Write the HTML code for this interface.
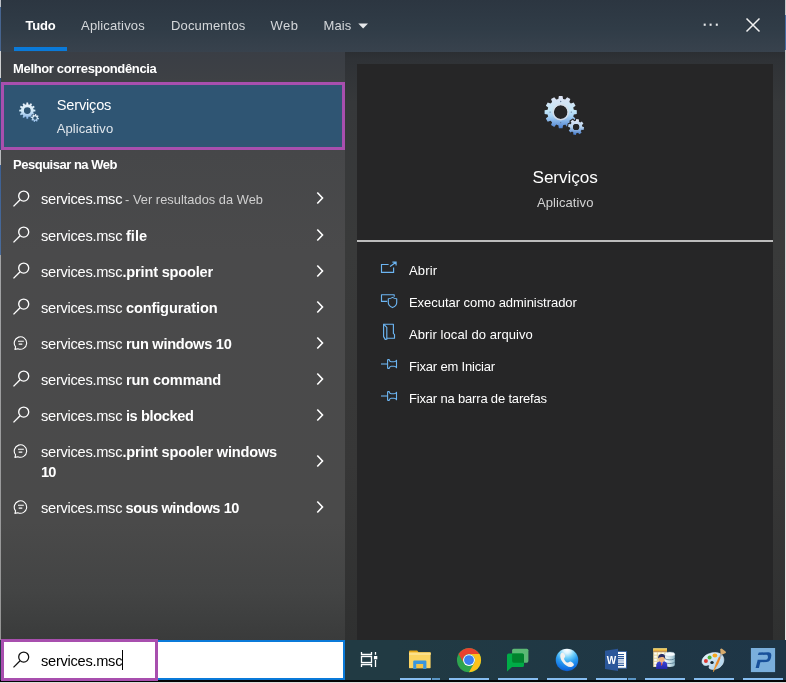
<!DOCTYPE html>
<html lang="pt-BR"><head><meta charset="utf-8"><title>Pesquisar</title>
<style>
*{box-sizing:border-box;margin:0;padding:0}
html,body{width:786px;height:683px;overflow:hidden;background:#2c2e31}
body{position:relative;font-family:"Liberation Sans","DejaVu Sans",sans-serif;color:#fff;font-size:13px}
.abs{position:absolute}
.tx{position:absolute;white-space:nowrap;line-height:20px;height:20px}
#edge{left:0;top:0;width:1px;height:640px;background:linear-gradient(180deg,#bcc0c6 0,#bcc0c6 7px,#46648f 7px,#46648f 51px,#cfcfd0 51px,#cfcfd0 78px,#33507a 78px,#33507a 150px,#b9babd 150px,#b9babd 165px,#3c5f92 165px,#4a6c9c 255px,#a2a3a5 255px,#959595 100%)}
#edger{left:785px;top:0;width:1px;height:640px;background:linear-gradient(180deg,#c4c6c9 0,#c4c6c9 15px,#4a6ea2 15px,#4a6ea2 50px,#c9cacc 50px,#e4e4e4 100%)}
#header{left:1px;top:0;width:784px;height:52px;background:linear-gradient(180deg,#2c3641 0%,#303c47 55%,#38424d 100%)}
#left{left:1px;top:52px;width:344px;height:588px;background:linear-gradient(180deg,#3a3e45 0,#3e4145 30px,#464749 100px,#4a4a4b 200px,#4a4a4a 470px,#434444 540px,#3a3b3b 588px)}
#right{left:345px;top:52px;width:440px;height:588px;background:linear-gradient(180deg,#2b2e32 0,#2f3236 8px,#36383a 50px,#393a3a 33%,#373737 70%,#2f3030 100%)}
#card{left:357px;top:64px;width:416px;height:576px;background:#262627}
#divider{left:357px;top:240px;width:416px;height:2px;background:#bcbcbc}
#tabline{left:14px;top:47px;width:53px;height:4px;background:#0a7ad9}
#sel{left:1px;top:82px;width:344px;height:68px;background:#2f5573;border:3px solid #a84fae}
#taskbar{left:0;top:640px;width:786px;height:40px;background:linear-gradient(90deg,#213a43 0,#213a43 50%,#1e3546 100%)}
#tbline{left:0;top:680px;width:786px;height:2px;background:#050505}
#tbline2{left:0;top:682px;width:786px;height:1px;background:#dcdcdc}
#sbox{left:1px;top:640px;width:344px;height:40px;background:#fff;border:2px solid #0a7ad9;border-left:0}
#sboxp{left:1px;top:639px;width:157px;height:42px;border:3px solid #a84fae;background:#fff}
#caret{left:122px;top:650px;width:1.2px;height:19.6px;background:#000}
#txt{position:absolute;left:0;top:0;width:786px;height:683px;will-change:transform}
.ul{position:absolute;top:678px;height:2px;background:#86bdf0}
</style></head><body>
<div id="header" class="abs"></div>
<div id="left" class="abs"></div>
<div id="right" class="abs"></div>
<div id="card" class="abs"></div>
<div id="divider" class="abs"></div>
<div id="edge" class="abs"></div>
<div id="edger" class="abs"></div>
<div id="tabline" class="abs"></div>
<div id="sel" class="abs"></div>
<svg class="abs" style="left:357.5px;top:23px" width="11" height="6" viewBox="0 0 11 6"><path d="M0.3 0.4 H10 L5.15 5.5 Z" fill="#e6e8ea"/></svg>
<svg class="abs" style="left:702px;top:22px" width="18" height="6" viewBox="0 0 18 6" fill="#e8eaec"><rect x="1.7" y="1.6" width="2" height="2.2"/><rect x="7.6" y="1.6" width="2" height="2.2"/><rect x="13.8" y="1.6" width="2" height="2.2"/></svg>
<svg class="abs" style="left:745px;top:17px" width="16" height="16" viewBox="0 0 16 16" stroke="#f2f2f2" stroke-width="1.5" fill="none"><path d="M1.5 1.5 L14.5 14.5 M14.5 1.5 L1.5 14.5"/></svg>
<svg class="abs" style="left:544px;top:95px" width="42" height="42" viewBox="0 0 42 42">
<defs><linearGradient id="gg" x1="0" y1="0" x2="0" y2="1"><stop offset="0" stop-color="#dfe3f3"/><stop offset="0.45" stop-color="#c3e6f7"/><stop offset="0.62" stop-color="#a9d4f6"/><stop offset="1" stop-color="#4f82d0"/></linearGradient>
<linearGradient id="gg2" x1="0" y1="0" x2="0" y2="1"><stop offset="0" stop-color="#e6eaf5"/><stop offset="0.5" stop-color="#b5d2ee"/><stop offset="1" stop-color="#3f76c8"/></linearGradient></defs>
<path d="M29.55,13.66 L29.79,14.74 L32.79,15.26 L32.79,18.94 L29.79,19.46 L29.55,20.54 L29.21,21.61 L31.56,23.55 L29.72,26.74 L26.86,25.68 L26.10,26.50 L25.28,27.26 L26.34,30.12 L23.15,31.96 L21.21,29.61 L20.14,29.95 L19.06,30.19 L18.54,33.19 L14.86,33.19 L14.34,30.19 L13.26,29.95 L12.19,29.61 L10.25,31.96 L7.06,30.12 L8.12,27.26 L7.30,26.50 L6.54,25.68 L3.68,26.74 L1.84,23.55 L4.19,21.61 L3.85,20.54 L3.61,19.46 L0.61,18.94 L0.61,15.26 L3.61,14.74 L3.85,13.66 L4.19,12.59 L1.84,10.65 L3.68,7.46 L6.54,8.52 L7.30,7.70 L8.12,6.94 L7.06,4.08 L10.25,2.24 L12.19,4.59 L13.26,4.25 L14.34,4.01 L14.86,1.01 L18.54,1.01 L19.06,4.01 L20.14,4.25 L21.21,4.59 L23.15,2.24 L26.34,4.08 L25.28,6.94 L26.10,7.70 L26.86,8.52 L29.72,7.46 L31.56,10.65 L29.21,12.59Z M23.50,17.10 A6.80,6.80 0 1,0 9.90,17.10 A6.80,6.80 0 1,0 23.50,17.10Z" fill="url(#gg)" fill-rule="evenodd"/>
<circle cx="16.7" cy="17.1" r="7.7" fill="none" stroke="#d9dde6" stroke-width="1.4" opacity="0.9"/>
<g fill="#5f7596"><circle cx="16.7" cy="6.5" r="0.65"/><circle cx="16.7" cy="27.7" r="0.65"/><circle cx="6.1" cy="17.1" r="0.65"/><circle cx="27.3" cy="17.1" r="0.65"/></g>
<path d="M38.09,30.83 L38.19,31.59 L40.10,32.23 L39.56,34.90 L37.55,34.75 L37.16,35.41 L36.69,36.01 L37.59,37.82 L35.32,39.32 L34.01,37.79 L33.27,37.99 L32.51,38.09 L31.87,40.00 L29.20,39.46 L29.35,37.45 L28.69,37.06 L28.09,36.59 L26.28,37.49 L24.78,35.22 L26.31,33.91 L26.11,33.17 L26.01,32.41 L24.10,31.77 L24.64,29.10 L26.65,29.25 L27.04,28.59 L27.51,27.99 L26.61,26.18 L28.88,24.68 L30.19,26.21 L30.93,26.01 L31.69,25.91 L32.33,24.00 L35.00,24.54 L34.85,26.55 L35.51,26.94 L36.11,27.41 L37.92,26.51 L39.42,28.78 L37.89,30.09Z M35.20,32.00 A3.10,3.10 0 1,0 29.00,32.00 A3.10,3.10 0 1,0 35.20,32.00Z" fill="#262627" stroke="#262627" stroke-width="2.2" stroke-linejoin="round"/>
<path d="M38.09,30.83 L38.19,31.59 L40.10,32.23 L39.56,34.90 L37.55,34.75 L37.16,35.41 L36.69,36.01 L37.59,37.82 L35.32,39.32 L34.01,37.79 L33.27,37.99 L32.51,38.09 L31.87,40.00 L29.20,39.46 L29.35,37.45 L28.69,37.06 L28.09,36.59 L26.28,37.49 L24.78,35.22 L26.31,33.91 L26.11,33.17 L26.01,32.41 L24.10,31.77 L24.64,29.10 L26.65,29.25 L27.04,28.59 L27.51,27.99 L26.61,26.18 L28.88,24.68 L30.19,26.21 L30.93,26.01 L31.69,25.91 L32.33,24.00 L35.00,24.54 L34.85,26.55 L35.51,26.94 L36.11,27.41 L37.92,26.51 L39.42,28.78 L37.89,30.09Z M35.20,32.00 A3.10,3.10 0 1,0 29.00,32.00 A3.10,3.10 0 1,0 35.20,32.00Z" fill="url(#gg2)" fill-rule="evenodd"/>
<circle cx="32.1" cy="32" r="3.1" fill="#262627"/>
</svg>
<svg class="abs" style="left:19px;top:101.8px" width="21" height="21" viewBox="0 0 21 21">
<defs><linearGradient id="gs" x1="0" y1="0" x2="0" y2="1"><stop offset="0" stop-color="#eef1f8"/><stop offset="0.5" stop-color="#d3ebf8"/><stop offset="1" stop-color="#86b2e6"/></linearGradient></defs>
<path d="M14.39,6.97 L14.52,7.58 L16.36,7.76 L16.36,9.44 L14.52,9.62 L14.39,10.23 L14.19,10.83 L15.70,11.90 L14.86,13.36 L13.18,12.59 L12.75,13.05 L12.29,13.48 L13.06,15.16 L11.60,16.00 L10.53,14.49 L9.93,14.69 L9.32,14.82 L9.14,16.66 L7.46,16.66 L7.28,14.82 L6.67,14.69 L6.07,14.49 L5.00,16.00 L3.54,15.16 L4.31,13.48 L3.85,13.05 L3.42,12.59 L1.74,13.36 L0.90,11.90 L2.41,10.83 L2.21,10.23 L2.08,9.62 L0.24,9.44 L0.24,7.76 L2.08,7.58 L2.21,6.97 L2.41,6.37 L0.90,5.30 L1.74,3.84 L3.42,4.61 L3.85,4.15 L4.31,3.72 L3.54,2.04 L5.00,1.20 L6.07,2.71 L6.67,2.51 L7.28,2.38 L7.46,0.54 L9.14,0.54 L9.32,2.38 L9.93,2.51 L10.53,2.71 L11.60,1.20 L13.06,2.04 L12.29,3.72 L12.75,4.15 L13.18,4.61 L14.86,3.84 L15.70,5.30 L14.19,6.37Z M11.70,8.60 A3.40,3.40 0 1,0 4.90,8.60 A3.40,3.40 0 1,0 11.70,8.60Z" fill="url(#gs)" fill-rule="evenodd"/>
<path d="M18.85,15.44 L18.90,15.87 L20.00,16.18 L19.75,17.39 L18.62,17.24 L18.41,17.62 L18.14,17.96 L18.70,18.95 L17.67,19.64 L16.97,18.73 L16.56,18.85 L16.13,18.90 L15.82,20.00 L14.61,19.75 L14.76,18.62 L14.38,18.41 L14.04,18.14 L13.05,18.70 L12.36,17.67 L13.27,16.97 L13.15,16.56 L13.10,16.13 L12.00,15.82 L12.25,14.61 L13.38,14.76 L13.59,14.38 L13.86,14.04 L13.30,13.05 L14.33,12.36 L15.03,13.27 L15.44,13.15 L15.87,13.10 L16.18,12.00 L17.39,12.25 L17.24,13.38 L17.62,13.59 L17.96,13.86 L18.95,13.30 L19.64,14.33 L18.73,15.03Z M17.50,16.00 A1.50,1.50 0 1,0 14.50,16.00 A1.50,1.50 0 1,0 17.50,16.00Z" fill="#2f5573" stroke="#2f5573" stroke-width="1.2"/>
<path d="M18.85,15.44 L18.90,15.87 L20.00,16.18 L19.75,17.39 L18.62,17.24 L18.41,17.62 L18.14,17.96 L18.70,18.95 L17.67,19.64 L16.97,18.73 L16.56,18.85 L16.13,18.90 L15.82,20.00 L14.61,19.75 L14.76,18.62 L14.38,18.41 L14.04,18.14 L13.05,18.70 L12.36,17.67 L13.27,16.97 L13.15,16.56 L13.10,16.13 L12.00,15.82 L12.25,14.61 L13.38,14.76 L13.59,14.38 L13.86,14.04 L13.30,13.05 L14.33,12.36 L15.03,13.27 L15.44,13.15 L15.87,13.10 L16.18,12.00 L17.39,12.25 L17.24,13.38 L17.62,13.59 L17.96,13.86 L18.95,13.30 L19.64,14.33 L18.73,15.03Z M17.50,16.00 A1.50,1.50 0 1,0 14.50,16.00 A1.50,1.50 0 1,0 17.50,16.00Z" fill="url(#gs)" fill-rule="evenodd"/>
<circle cx="16" cy="16" r="1.5" fill="#2f5573"/>
</svg>
<svg class="abs" style="left:12.7px;top:189.5px" width="18" height="18" viewBox="0 0 18 18" fill="none" stroke="#fff" stroke-width="1.35" stroke-linecap="butt"><circle cx="10.7" cy="6.1" r="5"/><path d="M7.1 9.7 L0.5 16.4"/></svg>
<svg class="abs" style="left:12.7px;top:226.2px" width="18" height="18" viewBox="0 0 18 18" fill="none" stroke="#fff" stroke-width="1.35" stroke-linecap="butt"><circle cx="10.7" cy="6.1" r="5"/><path d="M7.1 9.7 L0.5 16.4"/></svg>
<svg class="abs" style="left:12.7px;top:262.2px" width="18" height="18" viewBox="0 0 18 18" fill="none" stroke="#fff" stroke-width="1.35" stroke-linecap="butt"><circle cx="10.7" cy="6.1" r="5"/><path d="M7.1 9.7 L0.5 16.4"/></svg>
<svg class="abs" style="left:12.7px;top:298.2px" width="18" height="18" viewBox="0 0 18 18" fill="none" stroke="#fff" stroke-width="1.35" stroke-linecap="butt"><circle cx="10.7" cy="6.1" r="5"/><path d="M7.1 9.7 L0.5 16.4"/></svg>
<svg class="abs" style="left:13.1px;top:335.2px" width="16" height="16" viewBox="0 0 16 16" fill="none" stroke="#fff" stroke-width="1.1" stroke-linejoin="round"><path d="M2.6 11.9 A6.2 6.2 0 1 1 4.9 13.7 L1.9 14.4 Z"/><path d="M5 6.3 H10.8 M5.7 9.1 H9.3" stroke-width="1.1"/></svg>
<svg class="abs" style="left:12.7px;top:370.2px" width="18" height="18" viewBox="0 0 18 18" fill="none" stroke="#fff" stroke-width="1.35" stroke-linecap="butt"><circle cx="10.7" cy="6.1" r="5"/><path d="M7.1 9.7 L0.5 16.4"/></svg>
<svg class="abs" style="left:12.7px;top:406.2px" width="18" height="18" viewBox="0 0 18 18" fill="none" stroke="#fff" stroke-width="1.35" stroke-linecap="butt"><circle cx="10.7" cy="6.1" r="5"/><path d="M7.1 9.7 L0.5 16.4"/></svg>
<svg class="abs" style="left:13.1px;top:443.2px" width="16" height="16" viewBox="0 0 16 16" fill="none" stroke="#fff" stroke-width="1.1" stroke-linejoin="round"><path d="M2.6 11.9 A6.2 6.2 0 1 1 4.9 13.7 L1.9 14.4 Z"/><path d="M5 6.3 H10.8 M5.7 9.1 H9.3" stroke-width="1.1"/></svg>
<svg class="abs" style="left:13.1px;top:499.2px" width="16" height="16" viewBox="0 0 16 16" fill="none" stroke="#fff" stroke-width="1.1" stroke-linejoin="round"><path d="M2.6 11.9 A6.2 6.2 0 1 1 4.9 13.7 L1.9 14.4 Z"/><path d="M5 6.3 H10.8 M5.7 9.1 H9.3" stroke-width="1.1"/></svg>
<svg class="abs" style="left:315.5px;top:191.3px" width="9" height="14" viewBox="0 0 9 14" fill="none" stroke="#fff" stroke-width="1.6"><path d="M1.3 1.5 L6.5 7 L1.3 12.5"/></svg>
<svg class="abs" style="left:315.5px;top:228px" width="9" height="14" viewBox="0 0 9 14" fill="none" stroke="#fff" stroke-width="1.6"><path d="M1.3 1.5 L6.5 7 L1.3 12.5"/></svg>
<svg class="abs" style="left:315.5px;top:264px" width="9" height="14" viewBox="0 0 9 14" fill="none" stroke="#fff" stroke-width="1.6"><path d="M1.3 1.5 L6.5 7 L1.3 12.5"/></svg>
<svg class="abs" style="left:315.5px;top:300px" width="9" height="14" viewBox="0 0 9 14" fill="none" stroke="#fff" stroke-width="1.6"><path d="M1.3 1.5 L6.5 7 L1.3 12.5"/></svg>
<svg class="abs" style="left:315.5px;top:336px" width="9" height="14" viewBox="0 0 9 14" fill="none" stroke="#fff" stroke-width="1.6"><path d="M1.3 1.5 L6.5 7 L1.3 12.5"/></svg>
<svg class="abs" style="left:315.5px;top:372px" width="9" height="14" viewBox="0 0 9 14" fill="none" stroke="#fff" stroke-width="1.6"><path d="M1.3 1.5 L6.5 7 L1.3 12.5"/></svg>
<svg class="abs" style="left:315.5px;top:408px" width="9" height="14" viewBox="0 0 9 14" fill="none" stroke="#fff" stroke-width="1.6"><path d="M1.3 1.5 L6.5 7 L1.3 12.5"/></svg>
<svg class="abs" style="left:315.5px;top:454px" width="9" height="14" viewBox="0 0 9 14" fill="none" stroke="#fff" stroke-width="1.6"><path d="M1.3 1.5 L6.5 7 L1.3 12.5"/></svg>
<svg class="abs" style="left:315.5px;top:500px" width="9" height="14" viewBox="0 0 9 14" fill="none" stroke="#fff" stroke-width="1.6"><path d="M1.3 1.5 L6.5 7 L1.3 12.5"/></svg>

<svg class="abs" style="left:380px;top:260px" width="18" height="14" viewBox="0 0 18 14" fill="none" stroke="#6cb5f2" stroke-width="1.15">
<path d="M8.6 4.5 H1.5 V12.4 H13.6 V7.4"/><path d="M10 6.5 L16 2.2 M12.4 2.1 H16.1 V5.6"/></svg>
<svg class="abs" style="left:380px;top:293px" width="18" height="16" viewBox="0 0 18 16" fill="none" stroke="#6cb5f2" stroke-width="1.15" stroke-linejoin="round">
<path d="M7.2 8.4 H1.5 V1.7 H14.2 V3.8"/><path d="M12.5 4.4 C11.3 5.3 9.8 5.7 8.3 5.7 V9.4 C8.3 11.9 10.3 13.6 12.5 14.6 C14.7 13.6 16.7 11.9 16.7 9.4 V5.7 C15.2 5.7 13.7 5.3 12.5 4.4 Z"/></svg>
<svg class="abs" style="left:381px;top:322px" width="16" height="19" viewBox="0 0 16 19" fill="none" stroke="#6cb5f2" stroke-width="1.15" stroke-linejoin="round">
<path d="M2.6 2.2 H12.4 V11.6 L13.5 12.4 V16.2 H6"/><path d="M2.6 2.2 L5.8 5.4 V17.3 L4.2 17.4 L2.6 14.6 Z"/></svg>
<svg class="abs" style="left:380px;top:357.5px" width="19" height="12" viewBox="0 0 19 12" fill="none" stroke="#6cb5f2" stroke-width="1.1" stroke-linejoin="round">
<path d="M1 6 H7.4"/><path d="M7.6 1.6 V10.4 M7.6 1.6 H9.2 Q9.6 3.7 11.2 3.7 H14 Q15.8 3.7 16.5 2.2 V9.8 Q15.8 8.3 14 8.3 H11.2 Q9.6 8.3 9.2 10.4 H7.6" /></svg>
<svg class="abs" style="left:380px;top:389.5px" width="19" height="12" viewBox="0 0 19 12" fill="none" stroke="#6cb5f2" stroke-width="1.1" stroke-linejoin="round">
<path d="M1 6 H7.4"/><path d="M7.6 1.6 V10.4 M7.6 1.6 H9.2 Q9.6 3.7 11.2 3.7 H14 Q15.8 3.7 16.5 2.2 V9.8 Q15.8 8.3 14 8.3 H11.2 Q9.6 8.3 9.2 10.4 H7.6" /></svg>

<div id="taskbar" class="abs"></div>
<div id="tbline" class="abs"></div>
<div id="tbline2" class="abs"></div>
<div id="sbox" class="abs"></div>
<div id="sboxp" class="abs"></div>
<svg class="abs" style="left:12.8px;top:651.1px" width="18" height="18" viewBox="0 0 18 18" fill="none" stroke="#111" stroke-width="1.25" stroke-linecap="butt"><circle cx="10.7" cy="6.1" r="5"/><path d="M7.1 9.7 L0.5 16.4"/></svg>
<div id="caret" class="abs"></div>

<!-- task view -->
<svg class="abs" style="left:359px;top:650px" width="20" height="19" viewBox="0 0 20 19" fill="none" stroke="#fff" stroke-width="1.3">
<path d="M2.5 1.9 V4.5 H12.5 V1.9"/><rect x="2.5" y="6.5" width="10" height="6"/><path d="M2.5 16.9 V14.5 H12.5 V16.9"/>
<path d="M16.5 1.9 V4.8 M16.5 10.1 V16.9"/><rect x="14.9" y="6" width="3.4" height="3.3" fill="#fff" stroke="none"/></svg>
<div class="ul" style="left:400px;width:31px"></div><div class="ul" style="left:432px;width:8px;background:#5a95c4"></div>
<!-- explorer -->
<svg class="abs" style="left:408px;top:649px" width="24" height="22" viewBox="0 0 24 22">
<path d="M1 2.6 Q1 1.6 2 1.6 H9.2 L10.6 3.2 H22 Q22.6 3.2 22.6 3.8 V5 H1 Z" fill="#e8a91a"/>
<rect x="1" y="3.6" width="21.6" height="15.6" rx="0.6" fill="#fbd462"/>
<rect x="1" y="3.6" width="21.6" height="2.4" fill="#fce08a"/>
<path d="M5.2 19.9 V12.6 Q5.2 11.6 6.2 11.6 H17.4 Q18.4 11.6 18.4 12.6 V19.9 H15.1 V15 H8.5 V19.9 Z" fill="#3a96dd"/>
<rect x="8.5" y="15" width="6.6" height="4.2" fill="#f6c344"/>
</svg>
<div class="ul" style="left:449px;width:40px"></div>
<!-- chrome -->
<svg class="abs" style="left:456px;top:647px" width="26" height="26" viewBox="-13 -13.1 26 26">
<circle r="12.07" fill="#2ea44f"/>
<path d="M-10.43 -6.07 A12.07 12.07 0 0 1 10.47 -6 L0 -6 A6 6 0 0 0 -5.196 3 Z" fill="#e8412f"/>
<path d="M10.47 -6 A12.07 12.07 0 0 1 -0.04 12.07 L5.196 3 A6 6 0 0 0 0 -6 Z" fill="#fcc21b"/>
<circle r="5.95" fill="#fff"/><circle r="4.95" fill="#3a7ff0"/>
</svg>
<div class="ul" style="left:498px;width:40px"></div>
<!-- google chat -->
<svg class="abs" style="left:505px;top:647px" width="26" height="26" viewBox="0 0 26 26">
<rect x="7.1" y="1.7" width="16.3" height="14" rx="1.6" fill="#5bb974"/>
<path d="M3.6 6.6 H17.4 Q19 6.6 19 8.2 V18.4 Q19 20 17.4 20 H7 L2 24.4 V8.2 Q2 6.6 3.6 6.6 Z" fill="#00ac47"/>
<path d="M7.1 6.6 H17.4 Q19 6.6 19 8.2 V15.7 H8.7 Q7.1 15.7 7.1 14.1 Z" fill="#00832d"/>
</svg>
<div class="ul" style="left:547px;width:40px"></div>
<!-- phone -->
<svg class="abs" style="left:555px;top:648px" width="24" height="24" viewBox="-12 -12 24 24">
<defs><radialGradient id="ph" cx="0.5" cy="0.08" r="0.95" fx="0.5" fy="0.05"><stop offset="0" stop-color="#ffffff"/><stop offset="0.16" stop-color="#dcf4fe"/><stop offset="0.36" stop-color="#72d1fa"/><stop offset="0.58" stop-color="#2c9ef0"/><stop offset="0.84" stop-color="#1273e4"/><stop offset="1" stop-color="#0b55c6"/></radialGradient></defs>
<circle cx="0" cy="-0.1" r="11.25" fill="url(#ph)"/>
<path d="M-5.6 -6.9 C-7.4 -5.5 -7 -1.5 -4.6 1.8 C-2.2 5.2 1.5 7.5 4.2 7 C5.8 6.7 7 5.6 6.9 4.6 C6.8 3.6 4.8 2 3.6 1.5 C2.6 1.1 1.8 2.6 0.6 2.6 C-0.8 2.6 -2.8 0.2 -2.9 -1.2 C-3 -2.2 -1.6 -2.8 -1.8 -3.9 C-2 -5.2 -3.2 -6.9 -4 -7.2 C-4.6 -7.4 -5.1 -7.3 -5.6 -6.9 Z" fill="#f3f1ef"/>
</svg>
<div class="ul" style="left:596px;width:31px"></div><div class="ul" style="left:628px;width:8px;background:#5a95c4"></div>
<!-- word -->
<svg class="abs" style="left:603px;top:647px;will-change:transform" width="26" height="26" viewBox="0 0 26 26">
<rect x="12.5" y="4.4" width="11" height="16.8" fill="#fff" stroke="#2b579a" stroke-width="0.9"/>
<path d="M15 7.5 H21 M15 9.6 H21 M15 11.6 H21 M15 16.3 H21 M15 18.4 H21" stroke="#2b579a" stroke-width="1.1"/><path d="M15 13.9 H21" stroke="#a9bbd8" stroke-width="1.6"/>
<path d="M2 3.8 L15 1.8 V23.9 L2 21.9 Z" fill="#2b579a"/>
<text x="8.4" y="17" font-family="Liberation Sans, sans-serif" font-weight="bold" font-size="10" fill="#fff" text-anchor="middle">W</text>
</svg>
<div class="ul" style="left:645px;width:40px"></div>
<!-- db user -->
<svg class="abs" style="left:652px;top:647px" width="24" height="24" viewBox="0 0 24 24">
<defs><linearGradient id="dbh" x1="0" y1="0" x2="0" y2="1"><stop offset="0" stop-color="#f9dc6a"/><stop offset="1" stop-color="#dfa233"/></linearGradient>
<linearGradient id="dbc" x1="0" y1="0" x2="1" y2="0"><stop offset="0" stop-color="#f4fafc"/><stop offset="0.45" stop-color="#d4e8ee"/><stop offset="1" stop-color="#8fb6c6"/></linearGradient>
<linearGradient id="dbs" x1="0" y1="0" x2="0" y2="1"><stop offset="0" stop-color="#3a46d8"/><stop offset="1" stop-color="#2226a8"/></linearGradient></defs>
<rect x="1.2" y="1.4" width="13.8" height="18.6" fill="#e6d6a2"/>
<rect x="1.2" y="1.4" width="13.8" height="2.9" fill="url(#dbh)"/><rect x="1.2" y="4.3" width="13.8" height="0.5" fill="#a8683a"/>
<g fill="#fdfdf8"><rect x="2.2" y="5.6" width="2.6" height="2"/><rect x="5.9" y="5.6" width="2.6" height="2"/><rect x="9.6" y="5.6" width="2.6" height="2"/><rect x="2.2" y="8.7" width="2.6" height="2"/><rect x="5.9" y="8.7" width="2.6" height="2"/><rect x="2.2" y="11.8" width="2.6" height="2"/><rect x="2.2" y="14.9" width="2.6" height="2"/><rect x="2.2" y="17.6" width="2.6" height="1.8"/></g>
<path d="M12.7 7.2 V18 C12.7 20.6 22.8 20.6 22.8 18 V7.2 Z" fill="url(#dbc)"/>
<ellipse cx="17.75" cy="7.2" rx="5.05" ry="2.1" fill="#f6fbfd" stroke="#9fbccb" stroke-width="0.4"/>
<path d="M12.7 11 C12.7 13.4 22.8 13.4 22.8 11 M12.7 14.7 C12.7 17.1 22.8 17.1 22.8 14.7" stroke="#4b6f86" stroke-width="0.75" fill="none"/>
<path d="M4.1 22.1 L4.3 17.6 Q4.6 15 7.6 14.3 L11.8 14.3 Q15 15 15.2 17.6 L15.4 22.1 Z" fill="url(#dbs)"/>
<path d="M8.5 14.3 L9.7 18.8 L10.9 14.3 Z" fill="#f2f2f8"/><path d="M9.35 14.9 H10.05 L10.3 17.6 L9.7 18.8 L9.1 17.6 Z" fill="#d9452f"/>
<ellipse cx="9.7" cy="12.2" rx="2.7" ry="3" fill="#f0b47e"/>
<path d="M6.3 11.6 C5.6 8.2 8 7 9.8 7 C12 7 13.8 8.4 13 11.8 C12.4 10.4 11.6 9.8 9.6 9.9 C7.8 10 6.9 10.4 6.3 11.6 Z" fill="#2b2f66"/>
</svg>
<div class="ul" style="left:694px;width:40px"></div>
<!-- paint -->
<svg class="abs" style="left:701px;top:647px" width="26" height="26" viewBox="0 0 26 26">
<defs><linearGradient id="pal" x1="0" y1="0" x2="1" y2="1"><stop offset="0" stop-color="#eaf4fb"/><stop offset="0.5" stop-color="#c9e2f3"/><stop offset="1" stop-color="#a5cdea"/></linearGradient>
<linearGradient id="brh" x1="0" y1="0" x2="1" y2="0"><stop offset="0" stop-color="#f7a63c"/><stop offset="1" stop-color="#e2761a"/></linearGradient></defs>
<path d="M13.5 5.6 C19.5 5.2 23.2 9 22.8 13.4 C22.4 18.6 17.4 22.6 11.4 22.4 C8.6 22.3 7.4 21 8.2 19.6 C8.8 18.4 8 17.6 6.4 18.2 C3.6 19.2 1 17.6 1 14.6 C1 9.8 6.6 6 13.5 5.6 Z" fill="url(#pal)" stroke="#e4f1fa" stroke-width="0.6"/>
<ellipse cx="11" cy="15.6" rx="1.7" ry="1.5" fill="#16262e"/>
<ellipse cx="4.9" cy="14" rx="2" ry="1.9" fill="#dc3a32"/>
<ellipse cx="8.6" cy="10.5" rx="2" ry="2" fill="#4cb43a"/>
<ellipse cx="13.9" cy="8.6" rx="2.4" ry="2" fill="#f6a81e"/>
<path d="M18 9.8 L19.7 10.6 L17.4 16.5 L12.5 24.9 L11.9 24.5 L15.2 15.6 Z" fill="url(#brh)"/>
<path d="M19.6 6.8 L21.4 7.6 L19.7 10.6 L18 9.8 Z" fill="#a2a9b1"/>
<path d="M19.6 6.8 L19.2 2.2 Q20 1.4 21 1.7 L24.6 4.6 Q25.2 5.4 24.8 6.1 L21.4 7.6 Z" fill="#d7aa6c"/>
</svg>
<div class="ul" style="left:743px;width:40px"></div>
<!-- P -->
<svg class="abs" style="left:750px;top:647px" width="26" height="26" viewBox="0 0 26 26">
<rect x="0.9" y="1" width="24.2" height="24.1" fill="#7aafdc"/>
<path d="M5.6 20.9 L7.7 12.7 L16 12.7 Q17.6 12.6 17.9 10.8 Q18.3 7.9 16.4 7.8 L7.8 8 L8.8 5.5 L18.2 5.2 Q21.6 5.3 21.3 8.8 Q21 14.6 16.8 15 L10.3 15.2 L8.9 20.9 Z" fill="#18509a"/>
</svg>

<div id="txt">
<div class="tx" style="left:25.50px;top:18px;line-height:15px;height:15px;font-size:13px;font-weight:bold;color:#ffffff;letter-spacing:-0.203px">Tudo</div>
<div class="tx" style="left:81.10px;top:18px;line-height:15px;height:15px;font-size:13px;font-weight:normal;color:#d4d7da;letter-spacing:0.142px">Aplicativos</div>
<div class="tx" style="left:171.00px;top:18px;line-height:15px;height:15px;font-size:13px;font-weight:normal;color:#d4d7da;letter-spacing:0.152px">Documentos</div>
<div class="tx" style="left:270.50px;top:18px;line-height:15px;height:15px;font-size:13px;font-weight:normal;color:#d4d7da;letter-spacing:0.500px">Web</div>
<div class="tx" style="left:323.50px;top:18px;line-height:15px;height:15px;font-size:13px;font-weight:normal;color:#d4d7da;letter-spacing:0.137px">Mais</div>
<div class="tx" style="left:13.00px;top:61px;line-height:15px;height:15px;font-size:13px;font-weight:bold;color:#ffffff;letter-spacing:-0.340px">Melhor correspondência</div>
<div class="tx" style="left:56.80px;top:97px;line-height:16px;height:16px;font-size:14.6px;font-weight:normal;color:#ffffff;letter-spacing:-0.196px">Serviços</div>
<div class="tx" style="left:56.80px;top:121px;line-height:15px;height:15px;font-size:13px;font-weight:normal;color:#dfe6ec;letter-spacing:0.076px">Aplicativo</div>
<div class="tx" style="left:13.00px;top:157px;line-height:15px;height:15px;font-size:13px;font-weight:bold;color:#ffffff;letter-spacing:-0.484px">Pesquisar na Web</div>
<div class="tx" style="left:41.00px;top:191px;line-height:16px;height:16px;font-size:14.6px;font-weight:normal;color:#ffffff;letter-spacing:-0.261px">services.msc</div>
<div class="tx" style="left:125.00px;top:192px;line-height:15px;height:15px;font-size:12.8px;font-weight:normal;color:#d0d0d0;letter-spacing:0.041px">- Ver resultados da Web</div>
<div class="tx" style="left:41.00px;top:228px;line-height:16px;height:16px;font-size:14.6px;font-weight:normal;color:#ffffff;letter-spacing:-0.261px">services.msc</div>
<div class="tx" style="left:125.90px;top:228px;line-height:16px;height:16px;font-size:14.6px;font-weight:bold;color:#ffffff;letter-spacing:0.077px">file</div>
<div class="tx" style="left:41.00px;top:264px;line-height:16px;height:16px;font-size:14.6px;font-weight:normal;color:#ffffff;letter-spacing:-0.261px">services.msc</div>
<div class="tx" style="left:122.50px;top:264px;line-height:16px;height:16px;font-size:14.6px;font-weight:bold;color:#ffffff;letter-spacing:-0.196px">.print spooler</div>
<div class="tx" style="left:41.00px;top:300px;line-height:16px;height:16px;font-size:14.6px;font-weight:normal;color:#ffffff;letter-spacing:-0.261px">services.msc</div>
<div class="tx" style="left:125.90px;top:300px;line-height:16px;height:16px;font-size:14.6px;font-weight:bold;color:#ffffff;letter-spacing:-0.126px">configuration</div>
<div class="tx" style="left:41.00px;top:336px;line-height:16px;height:16px;font-size:14.6px;font-weight:normal;color:#ffffff;letter-spacing:-0.261px">services.msc</div>
<div class="tx" style="left:125.90px;top:336px;line-height:16px;height:16px;font-size:14.6px;font-weight:bold;color:#ffffff;letter-spacing:-0.276px">run windows 10</div>
<div class="tx" style="left:41.00px;top:372px;line-height:16px;height:16px;font-size:14.6px;font-weight:normal;color:#ffffff;letter-spacing:-0.261px">services.msc</div>
<div class="tx" style="left:125.90px;top:372px;line-height:16px;height:16px;font-size:14.6px;font-weight:bold;color:#ffffff;letter-spacing:-0.118px">run command</div>
<div class="tx" style="left:41.00px;top:408px;line-height:16px;height:16px;font-size:14.6px;font-weight:normal;color:#ffffff;letter-spacing:-0.261px">services.msc</div>
<div class="tx" style="left:125.90px;top:408px;line-height:16px;height:16px;font-size:14.6px;font-weight:bold;color:#ffffff;letter-spacing:-0.368px">is blocked</div>
<div class="tx" style="left:41.00px;top:444px;line-height:16px;height:16px;font-size:14.6px;font-weight:normal;color:#ffffff;letter-spacing:-0.261px">services.msc</div>
<div class="tx" style="left:122.50px;top:444px;line-height:16px;height:16px;font-size:14.6px;font-weight:bold;color:#ffffff;letter-spacing:-0.201px">.print spooler windows</div>
<div class="tx" style="left:41.00px;top:464px;line-height:16px;height:16px;font-size:14.6px;font-weight:bold;color:#ffffff;letter-spacing:-0.867px">10</div>
<div class="tx" style="left:41.00px;top:500px;line-height:16px;height:16px;font-size:14.6px;font-weight:normal;color:#ffffff;letter-spacing:-0.261px">services.msc</div>
<div class="tx" style="left:125.50px;top:500px;line-height:16px;height:16px;font-size:14.6px;font-weight:bold;color:#ffffff;letter-spacing:-0.435px">sous windows 10</div>
<div class="tx" style="left:532.50px;top:167px;line-height:20px;height:20px;font-size:17.2px;font-weight:normal;color:#ffffff;letter-spacing:-0.076px">Serviços</div>
<div class="tx" style="left:536.90px;top:195px;line-height:15px;height:15px;font-size:13px;font-weight:normal;color:#d2d2d2;letter-spacing:0.096px">Aplicativo</div>
<div class="tx" style="left:409.00px;top:263px;line-height:15px;height:15px;font-size:13px;font-weight:normal;color:#ffffff;letter-spacing:0.149px">Abrir</div>
<div class="tx" style="left:409.00px;top:295px;line-height:15px;height:15px;font-size:13px;font-weight:normal;color:#ffffff;letter-spacing:-0.047px">Executar como administrador</div>
<div class="tx" style="left:409.00px;top:327px;line-height:15px;height:15px;font-size:13px;font-weight:normal;color:#ffffff;letter-spacing:0.081px">Abrir local do arquivo</div>
<div class="tx" style="left:409.00px;top:359px;line-height:15px;height:15px;font-size:13px;font-weight:normal;color:#ffffff;letter-spacing:-0.185px">Fixar em Iniciar</div>
<div class="tx" style="left:409.00px;top:391px;line-height:15px;height:15px;font-size:13px;font-weight:normal;color:#ffffff;letter-spacing:-0.178px">Fixar na barra de tarefas</div>
<div class="tx" style="left:41.00px;top:653px;line-height:16px;height:16px;font-size:14.6px;font-weight:normal;color:#000000;letter-spacing:-0.261px">services.msc</div>
</div>
</body></html>
